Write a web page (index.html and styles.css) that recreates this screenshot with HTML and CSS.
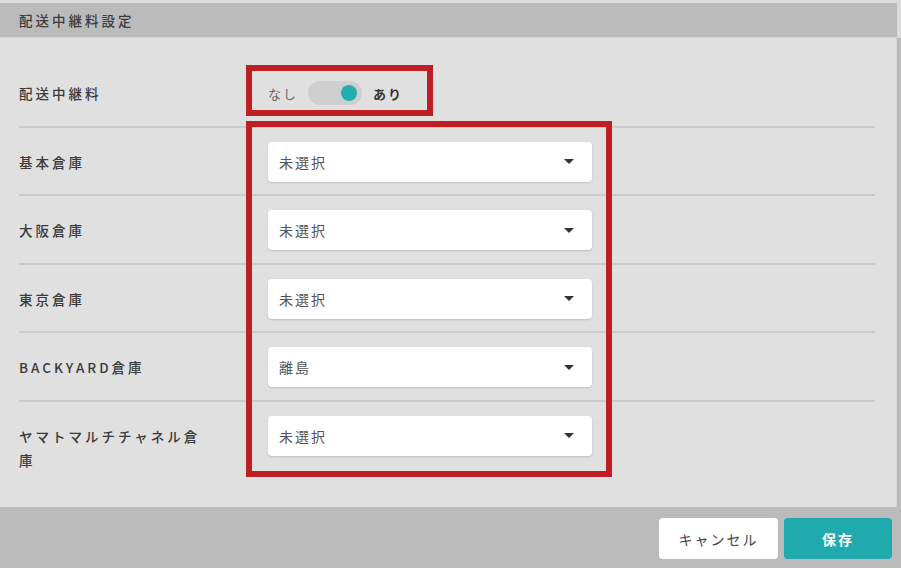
FILE: index.html
```html
<!DOCTYPE html>
<html lang="ja">
<head>
    <meta charset="UTF-8">
    <meta name="viewport" content="width=device-width, initial-scale=1.0">
    <title>配送中継料設定</title>
    <link rel="stylesheet" href="styles.css">
</head>
<body>
    <div class="modal">
        <div class="header-wrap">
            <div class="header">配送中継料設定</div>
        </div>
        <div class="content">
            <div class="row row-first">
                <div class="label">配送中継料</div>
                <div class="toggle">
                    <span class="off">なし</span>
                    <span class="track"><span class="knob"></span></span>
                    <span class="on">あり</span>
                </div>
            </div>
            <div class="row">
                <div class="label">基本倉庫</div>
                <div class="select"><span>未選択</span><i class="caret"></i></div>
            </div>
            <div class="row">
                <div class="label">大阪倉庫</div>
                <div class="select"><span>未選択</span><i class="caret"></i></div>
            </div>
            <div class="row">
                <div class="label">東京倉庫</div>
                <div class="select"><span>未選択</span><i class="caret"></i></div>
            </div>
            <div class="row">
                <div class="label">BACKYARD倉庫</div>
                <div class="select"><span>離島</span><i class="caret"></i></div>
            </div>
            <div class="row row-last">
                <div class="label">ヤマトマルチチャネル倉庫</div>
                <div class="select"><span>未選択</span><i class="caret"></i></div>
            </div>

            <div class="mark mark-toggle"></div>
            <div class="mark mark-selects"></div>
        </div>
        <div class="footer">
            <button class="btn btn-cancel">キャンセル</button>
            <button class="btn btn-save">保存</button>
        </div>
    </div>
</body>
</html>
```

FILE: styles.css
```css
body {
    margin: 0;
    font-family: "Noto Sans CJK JP", "Noto Sans", sans-serif;
    background-color: #bbbbbb;
    width: 901px;
    height: 568px;
    overflow: hidden;
}
.header-wrap {
    background-color: #dcdcdc;
    padding-top: 3px;
}
.header {
    background-color: #bbbbbb;
    height: 34px;
    margin-right: 4px;
    border-bottom: 1px solid #d2d2d2;
    padding-left: 19px;
    font-size: 13.5px;
    font-weight: 500;
    line-height: 34px;
    letter-spacing: 3px;
    color: #3c3c3c;
}
.content {
    position: relative;
    background-color: #e0e0e0;
    margin-right: 4px;
    height: 469px;
    padding: 0 21px 0 19px;
    border-right: 1px solid #d6d6d6;
}
.row {
    display: flex;
    align-items: center;
    padding: 14px 0 12.5px;
    border-bottom: 2px solid #cbcbcb;
}
.row-first {
    padding: 43px 0 20.5px;
}
.row-last {
    align-items: flex-start;
    border-bottom: none;
}
.label {
    width: 192px;
    margin-right: 57px;
    font-size: 13.5px;
    font-weight: 500;
    line-height: 24px;
    letter-spacing: 3px;
    color: #3a3a3a;
}
.row-last .label {
    margin-top: 8px;
}
.toggle {
    display: flex;
    align-items: center;
    height: 24px;
    font-size: 13px;
    letter-spacing: 2px;
}
.off {
    color: #666;
}
.on {
    color: #333;
    font-weight: bold;
}
.track {
    position: relative;
    width: 54px;
    height: 24px;
    border-radius: 12px;
    background-color: #cfcfcf;
    margin: 0 11px 0 10px;
}
.knob {
    position: absolute;
    right: 5px;
    top: 4px;
    width: 16px;
    height: 16px;
    border-radius: 50%;
    background-color: #22adb1;
}
.select {
    display: flex;
    align-items: center;
    justify-content: space-between;
    width: 324px;
    height: 40px;
    box-sizing: border-box;
    padding: 0 18px 0 11px;
    background-color: #fff;
    border-radius: 4px;
    box-shadow: 0 1px 2px rgba(0, 0, 0, 0.15);
    font-size: 14px;
    letter-spacing: 2px;
    color: #555;
}
.caret {
    width: 0;
    height: 0;
    border-left: 5.5px solid transparent;
    border-right: 5.5px solid transparent;
    border-top: 5.5px solid #333;
}
.mark {
    position: absolute;
    border: 6px solid #be1e24;
    box-sizing: border-box;
}
.mark-toggle {
    left: 246px;
    top: 27px;
    width: 187px;
    height: 51px;
}
.mark-selects {
    left: 246px;
    top: 83px;
    width: 366px;
    height: 356px;
}
.footer {
    display: flex;
    justify-content: flex-end;
    gap: 6px;
    padding: 11px 9px 0 0;
}
.btn {
    height: 41px;
    border: none;
    border-radius: 4px;
    font-family: inherit;
    font-size: 14px;
    letter-spacing: 2px;
    cursor: pointer;
}
.btn-cancel {
    width: 119px;
    background-color: #fff;
    color: #444;
}
.btn-save {
    width: 108px;
    background-color: #21aaae;
    color: #fff;
    font-weight: bold;
}
```
